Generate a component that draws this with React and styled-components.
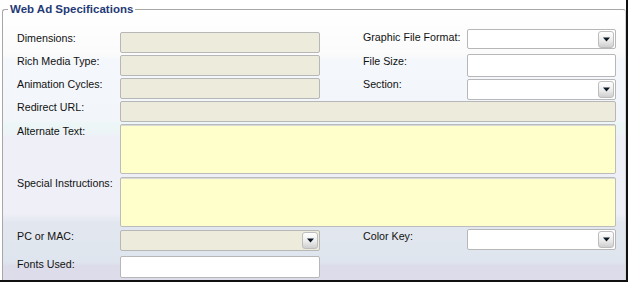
import React from "react";
import styled, { createGlobalStyle } from "styled-components";

const GlobalStyle = createGlobalStyle`
  html, body {
    margin: 0;
    padding: 0;
    background: #ffffff;
  }
  body {
    font-family: "Liberation Sans", Arial, sans-serif;
  }
`;

const Frame = styled.div`
  width: 628px;
  height: 282px;
  box-sizing: border-box;
  display: flex;
  padding: 2px 0 0 2px;
  border-right: 2px solid #101010;
  border-bottom: 2px solid #101010;
  background: #ffffff;
`;

const Fieldset = styled.fieldset`
  flex: 1;
  min-width: 0;
  margin: 0;
  padding: 0 9px 0 14px;
  border: 1px solid #a7a7a7;
  border-right-color: #d4d4d4;
  border-bottom: none;
  border-radius: 3px 3px 0 0;
  background: linear-gradient(
    to bottom,
    #ffffff 0px,
    #fbfbfc 44px,
    #f4f7fb 50px,
    #f2f6fa 110px,
    #ecf6f6 114px,
    #edf4f7 123px,
    #efeff8 127px,
    #eeeff7 204px,
    #e2e7ef 212px,
    #dfe5ee 252px,
    #dcdcea 256px
  );
`;

const Legend = styled.legend`
  margin-left: -9px;
  padding: 0 2px;
  font-family: "Liberation Sans", Arial, sans-serif;
  font-weight: bold;
  font-size: 11.5px;
  line-height: 14px;
  color: #1f3a76;
`;

const Grid = styled.div`
  display: grid;
  grid-template-columns: 103px 200px 43px 104px 149px;
  grid-template-rows: 23px 23px 23px 23px 53px 53px 26px 21px;
  align-items: start;
  padding-top: 16px;
`;

const Label = styled.div`
  grid-column: ${(p) => p.$col || 1};
  font-size: 10.7px;
  line-height: 13px;
  color: #111111;
  white-space: nowrap;
  margin-top: ${(p) => p.$top || 0}px;
`;

const fieldBase = `
  box-sizing: border-box;
  margin: 0;
  padding: 0 3px;
  border: 1px solid #b7b7b7;
  border-radius: 2px;
  outline: none;
  font-family: "Liberation Sans", Arial, sans-serif;
  font-size: 11px;
`;

const TextInput = styled.input`
  ${fieldBase}
  grid-column: ${(p) => p.$col || 2};
  width: 100%;
  height: ${(p) => p.$h || 21}px;
  margin-top: ${(p) => p.$top || 0}px;
  background: ${(p) => (p.$muted ? "#ecebdc" : "#ffffff")};
`;

const TextArea = styled.textarea`
  ${fieldBase}
  grid-column: 2 / 6;
  width: 100%;
  height: 50px;
  resize: none;
  background: #ffffcc;
  border-color: #bcbcbc;
  box-shadow: inset 0 1px 0 #d8d8d8;
`;

const SelectBox = styled.div`
  grid-column: ${(p) => p.$col || 2};
  box-sizing: border-box;
  height: ${(p) => p.$h || 21}px;
  margin-top: ${(p) => p.$top || 0}px;
  display: flex;
  justify-content: flex-end;
  align-items: center;
  padding-right: 1px;
  border: 1px solid #b7b7b7;
  border-radius: 2px;
  background: ${(p) => (p.$muted ? "#ecebdc" : "#ffffff")};
`;

const DropButton = styled.div`
  width: 16px;
  height: 17px;
  box-sizing: border-box;
  display: flex;
  align-items: center;
  justify-content: center;
  border: 1px solid #bdbdbd;
  border-radius: 3px;
  background: linear-gradient(to bottom, #ffffff 0%, #ececec 55%, #cfcfcf 100%);
`;

const Arrow = () => (
  <svg width="7" height="5" viewBox="0 0 7 5">
    <path d="M0 0.5h7L3.5 4.5z" fill="#0b1826" />
  </svg>
);

const Select = (props) => (
  <SelectBox {...props}>
    <DropButton>
      <Arrow />
    </DropButton>
  </SelectBox>
);

export default function App() {
  return (
    <>
      <GlobalStyle />
      <Frame>
        <Fieldset>
          <Legend>Web Ad Specifications</Legend>
          <Grid>
            <Label>Dimensions:</Label>
            <TextInput $muted readOnly />
            <Label $col={4} $top={-1}>Graphic File Format:</Label>
            <Select $col={5} $h={20} $top={-3} />

            <Label>Rich Media Type:</Label>
            <TextInput $muted readOnly />
            <Label $col={4}>File Size:</Label>
            <TextInput $col={5} $h={23} $top={-1} />

            <Label>Animation Cycles:</Label>
            <TextInput $muted readOnly />
            <Label $col={4}>Section:</Label>
            <Select $col={5} $top={1} />

            <Label>Redirect URL:</Label>
            <TextInput $muted readOnly style={{ gridColumn: "2 / 6" }} />

            <Label $top={1}>Alternate Text:</Label>
            <TextArea />

            <Label>Special Instructions:</Label>
            <TextArea />

            <Label>PC or MAC:</Label>
            <Select $muted />
            <Label $col={4}>Color Key:</Label>
            <Select $col={5} $top={-1} />

            <Label $top={2}>Fonts Used:</Label>
            <TextInput $h={22} />
          </Grid>
        </Fieldset>
      </Frame>
    </>
  );
}
